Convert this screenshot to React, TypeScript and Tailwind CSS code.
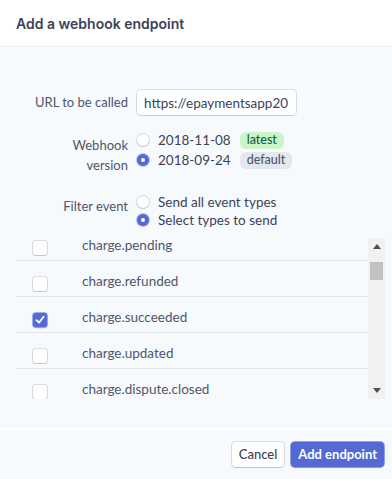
import React from 'react';

const events = [
  { name: 'charge.pending', checked: false },
  { name: 'charge.refunded', checked: false },
  { name: 'charge.succeeded', checked: true },
  { name: 'charge.updated', checked: false },
  { name: 'charge.dispute.closed', checked: false },
];

const Radio: React.FC<{ checked?: boolean }> = ({ checked }) =>
  checked ? (
    <span className="w-[12px] h-[12px] shrink-0 rounded-full bg-[#5469d4] flex items-center justify-center shadow-[0_0_0_1px_rgba(84,105,212,0.4)]">
      <span className="w-[4px] h-[4px] rounded-full bg-white" />
    </span>
  ) : (
    <span className="w-[12px] h-[12px] shrink-0 rounded-full bg-white shadow-[0_0_0_1px_rgba(60,66,87,0.16),0_1px_1px_rgba(0,0,0,0.12)]" />
  );

const Checkbox: React.FC<{ checked?: boolean }> = ({ checked }) =>
  checked ? (
    <span className="w-[14px] h-[14px] rounded-[3px] bg-[#5469d4] flex items-center justify-center shadow-[0_0_0_1px_rgba(84,105,212,0.5),0_1px_2px_rgba(84,105,212,0.4)]">
      <svg width="10" height="10" viewBox="0 0 10 10" fill="none">
        <path d="M1.5 5.2 L4 7.6 L8.6 1.8" stroke="white" strokeWidth="1.8" strokeLinecap="round" strokeLinejoin="round" />
      </svg>
    </span>
  ) : (
    <span className="w-[14px] h-[14px] rounded-[3px] bg-white shadow-[0_0_0_1px_rgba(60,66,87,0.16),0_1px_1px_rgba(0,0,0,0.12)]" />
  );

const App: React.FC = () => {
  return (
    <div className="w-[392px] h-[479px] flex flex-col bg-[#f7fafc] font-['Lato',sans-serif] text-[13px] text-[#4f566b] overflow-hidden">
      <div className="h-[47px] shrink-0 bg-white border-b border-[#eef0f3] flex items-center px-4">
        <h1 className="text-[14px] font-semibold text-[#3c4257] font-['Inter',sans-serif]">Add a webhook endpoint</h1>
      </div>

      <div className="flex-1 flex flex-col pt-[43px]">
        {/* URL */}
        <div className="flex gap-[9px] items-center">
          <div className="w-[128px] text-right">URL to be called</div>
          <input
            readOnly
            value="https://epaymentsapp2018.azurewebsites.net"
            className="h-[25px] w-[159px] bg-white rounded-[4px] shadow-[0_0_0_1px_rgba(60,66,87,0.16),0_1px_1px_rgba(0,0,0,0.08)] px-[7px] outline-none text-[13.5px] text-[#3c4257] font-['Lato',sans-serif]"
          />
        </div>

        {/* Webhook version */}
        <div className="flex gap-[9px] items-start mt-[15px]">
          <div className="w-[128px] text-right leading-[20px] pt-[5px]">
            Webhook<br />version
          </div>
          <div className="flex flex-col">
            <div className="h-[20px] flex items-center gap-[9px]">
              <Radio />
              <span className="text-[#3c4257] text-[13.5px]">2018-11-08</span>
              <span className="h-[17px] px-[7px] rounded-[6px] bg-[#cbf4c9] text-[#0e6245] text-[12.5px] font-medium flex items-center">latest</span>
            </div>
            <div className="h-[20px] flex items-center gap-[9px]">
              <Radio checked />
              <span className="text-[#3c4257] text-[13.5px]">2018-09-24</span>
              <span className="h-[17px] px-[7px] rounded-[6px] bg-[#e3e8ee] text-[#4f566b] text-[12.5px] font-medium flex items-center">default</span>
            </div>
          </div>
        </div>

        {/* Filter event */}
        <div className="flex gap-[9px] items-start mt-[18px]">
          <div className="w-[128px] text-right leading-[20px] pt-[3px]">Filter event</div>
          <div className="flex flex-col text-[13.5px]">
            <div className="h-[18px] flex items-center gap-[9px]">
              <Radio />
              <span className="text-[#3c4257]">Send all event types</span>
            </div>
            <div className="h-[18px] flex items-center gap-[9px]">
              <Radio checked />
              <span className="text-[#3c4257]">Select types to send</span>
            </div>
          </div>
        </div>

        {/* Event list, scrolled down a little */}
        <div className="mt-[9px] ml-4 mr-[7px] h-[161px] shrink-0 flex overflow-hidden">
          <div className="flex-1 overflow-hidden">
            <div className="-mt-[13px]">
              {events.map((e, i) => (
                <div
                  key={e.name}
                  className={`h-[36px] flex items-start ${i < events.length - 1 ? 'border-b border-[#e3e8ee]' : ''}`}
                >
                  <div className="w-[66px] pl-[17px] pt-[16px] flex">
                    <Checkbox checked={e.checked} />
                  </div>
                  <span className="pt-[13px] leading-[14px] text-[13.5px] text-[#4f566b]">{e.name}</span>
                </div>
              ))}
            </div>
          </div>
          <div className="w-[17px] bg-[#f1f1f1] flex flex-col items-center">
            <div className="h-[17px] flex items-center justify-center">
              <svg width="8" height="5" viewBox="0 0 8 5"><path d="M0 5 L4 0 L8 5 Z" fill="#505050" /></svg>
            </div>
            <div className="mt-[7px] w-[13px] h-[18px] bg-[#c1c1c1]" />
            <div className="flex-1" />
            <div className="h-[17px] flex items-center justify-center">
              <svg width="8" height="5" viewBox="0 0 8 5"><path d="M0 0 L8 0 L4 5 Z" fill="#505050" /></svg>
            </div>
          </div>
        </div>
      </div>

      <div className="h-[51px] shrink-0 border-t-2 border-white flex items-center justify-end gap-[7px] pr-2">
        <button className="h-[25px] px-[7px] rounded-[4px] bg-white text-[#3c4257] font-medium text-[13px] shadow-[0_0_0_1px_rgba(60,66,87,0.16),0_1px_1px_rgba(0,0,0,0.12)]">
          Cancel
        </button>
        <button className="h-[25px] px-[7px] rounded-[4px] bg-[#5469d4] text-white font-bold text-[13px] shadow-[0_0_0_1px_rgba(84,105,212,0.6),0_1px_1px_rgba(0,0,0,0.12)]">
          Add endpoint
        </button>
      </div>
    </div>
  );
};

export default App;
